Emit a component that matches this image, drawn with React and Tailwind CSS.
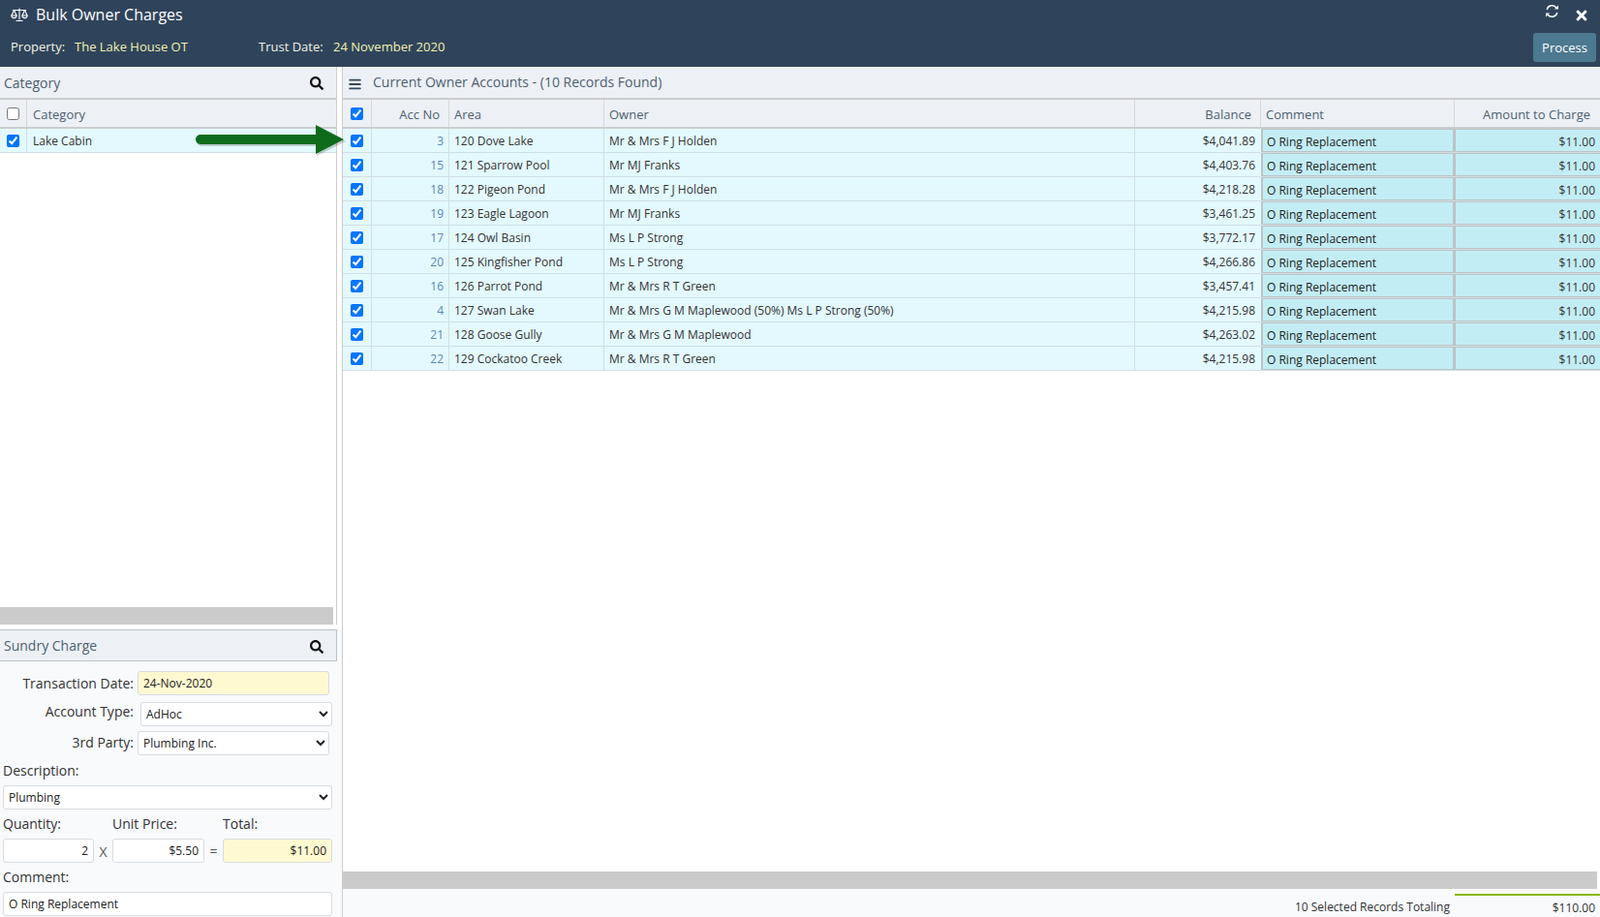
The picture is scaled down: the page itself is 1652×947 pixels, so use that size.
import React from "react";
import { FaSearch, FaBars, FaTimes } from "react-icons/fa";

const rows = [
  { acc: 3, area: "120 Dove Lake", owner: "Mr & Mrs F J Holden", balance: "$4,041.89" },
  { acc: 15, area: "121 Sparrow Pool", owner: "Mr MJ Franks", balance: "$4,403.76" },
  { acc: 18, area: "122 Pigeon Pond", owner: "Mr & Mrs F J Holden", balance: "$4,218.28" },
  { acc: 19, area: "123 Eagle Lagoon", owner: "Mr MJ Franks", balance: "$3,461.25" },
  { acc: 17, area: "124 Owl Basin", owner: "Ms L P Strong", balance: "$3,772.17" },
  { acc: 20, area: "125 Kingfisher Pond", owner: "Ms L P Strong", balance: "$4,266.86" },
  { acc: 16, area: "126 Parrot Pond", owner: "Mr & Mrs R T Green", balance: "$3,457.41" },
  { acc: 4, area: "127 Swan Lake", owner: "Mr & Mrs G M Maplewood (50%) Ms L P Strong (50%)", balance: "$4,215.98" },
  { acc: 21, area: "128 Goose Gully", owner: "Mr & Mrs G M Maplewood", balance: "$4,263.02" },
  { acc: 22, area: "129 Cockatoo Creek", owner: "Mr & Mrs R T Green", balance: "$4,215.98" },
];

function Check({ checked }) {
  return <input type="checkbox" defaultChecked={checked} className="w-[13px] h-[13px] m-0 mt-[1px]" />;
}

function PanelHeader({ title }) {
  return (
    <div className="h-[32px] flex items-center justify-between pl-1 pr-[13px] bg-[#edf0f5] text-[14px] text-[#4d6070]">
      <span>{title}</span>
      <FaSearch className="text-[#111] w-[14px] h-[14px] mt-[2px]" />
    </div>
  );
}

const fieldClass = "h-[25px] bg-white border border-[#d8dbe0] rounded-[3px] text-[12px] text-[#222] px-[5px] outline-none";
const selectClass = "h-[25px] bg-white border border-[#d8dbe0] rounded-[3px] text-[12px] text-[#222] px-[1px] outline-none";

export default function App() {
  return (
    <div className="relative w-[1652px] h-[947px] overflow-hidden bg-white flex flex-col font-['Open_Sans',sans-serif]">
      {/* Header */}
      <div className="h-[69px] shrink-0 bg-[#2f445b] flex justify-between">
        <div className="pl-[11px]">
          <div className="flex items-center h-[30px]">
            <svg width="18" height="16" viewBox="0 0 18 16" fill="none" stroke="white" strokeWidth="1.1">
              <path d="M9 1.5 V13.5 M5.5 14.5 H12.5 M2 3.5 H16" />
              <path d="M3.5 3.5 L1 9 M3.5 3.5 L6 9 M14.5 3.5 L12 9 M14.5 3.5 L17 9" />
              <path d="M0.8 9 H6.2 C6 12.5 1 12.5 0.8 9 Z M11.8 9 H17.2 C17 12.5 12 12.5 11.8 9 Z" />
            </svg>
            <span className="ml-[8px] text-[16px] text-white">Bulk Owner Charges</span>
          </div>
          <div className="flex items-center mt-[5px] text-[13px] h-[28px]">
            <span className="text-[#f2f2e4] w-[66px]">Property:</span>
            <span className="text-[#f3f0b0] w-[190px]">The Lake House OT</span>
            <span className="text-[#f2f2e4] w-[77px]">Trust Date:</span>
            <span className="text-[#f3f0b0]">24 November 2020</span>
          </div>
        </div>
        <div className="flex flex-col items-end pr-[4px]">
          <div className="flex items-start h-[34px] pr-[8px]">
            <svg className="mt-[4px]" width="15" height="15" viewBox="0 0 15 15" fill="none" stroke="white" strokeWidth="1.5">
              <path d="M2.2 6 A5.5 5.5 0 0 1 12 4" />
              <path d="M12.8 9 A5.5 5.5 0 0 1 3 11" />
              <path d="M14 1.5 V5.5 H10" fill="white" stroke="none" />
              <path d="M1 13.5 V9.5 H5" fill="white" stroke="none" />
            </svg>
            <FaTimes className="w-[14px] h-[16px] text-white ml-[16px] mt-[8px]" />
          </div>
          <button className="w-[65px] h-[30px] pt-[1px] bg-[#4d7990] rounded-[3px] text-[13px] text-white">Process</button>
        </div>
      </div>

      <div className="flex flex-1 min-h-0">
        {/* Left column */}
        <div className="w-[354px] shrink-0 flex flex-col border-r border-[#ccc] bg-[#f8fafc]">
          <div className="h-[576px] shrink-0 bg-white flex flex-col">
            <div className="w-[348px] flex-1 flex flex-col border-r border-[#ccc] mr-[5px]">
              <div className="border-b-2 border-[#ccc]">
                <PanelHeader title="Category" />
              </div>
              <div className="h-[30px] flex bg-[#edf0f5] border-b-2 border-[#ccc] text-[13px] text-[#4d6070]">
                <div className="w-[28px] flex items-center justify-center border-r border-[#d8d8d8]"><Check /></div>
                <div className="flex-1 flex items-center pl-[6px] pt-[3px]">Category</div>
              </div>
              <div className="h-[25px] flex bg-[#e3f9fe] border-b border-[#d0dfe3] text-[12px] text-[#333]">
                <div className="w-[28px] flex items-center justify-center border-r border-[#d0dfe3]"><Check checked /></div>
                <div className="flex-1 flex items-center pl-[6px] pt-[2px]">Lake Cabin</div>
              </div>
              <div className="flex-1" />
              <div className="h-[18px] bg-[#cbcbcb] mr-[3px]" />
            </div>
          </div>
          <div className="h-[5px] shrink-0 bg-white" />
          <div className="h-[33px] shrink-0 w-[348px] border-y border-r border-[#bcc2c8] flex flex-col justify-center">
            <PanelHeader title="Sundry Charge" />
          </div>

          {/* Form */}
          <div className="flex-1 pl-[3px] text-[14px] text-[#333]">
            <div className="flex items-center h-[25px] mt-[10px]">
              <span className="w-[135px] text-right -mt-[1px]">Transaction Date:</span>
              <input readOnly value="24-Nov-2020" className={`${fieldClass} ml-[4px] w-[198px] !bg-[#fff9d2]`} />
            </div>
            <div className="flex items-center h-[25px] mt-[7px]">
              <span className="w-[135px] text-right -mt-[6px]">Account Type:</span>
              <select className={`${selectClass} ml-[7px] w-[198px]`}><option>AdHoc</option></select>
            </div>
            <div className="flex items-center h-[25px] mt-[5px]">
              <span className="w-[135px] text-right -mt-[3px]">3rd Party:</span>
              <select className={`${selectClass} ml-[4px] w-[198px]`}><option>Plumbing Inc.</option></select>
            </div>
            <div className="h-[20px] mt-[6px] leading-[20px]">Description:</div>
            <select className={`${selectClass} block w-[340px] mt-[5px]`}><option>Plumbing</option></select>
            <div className="flex h-[20px] mt-[5px] leading-[20px]">
              <span className="w-[113px]">Quantity:</span>
              <span className="w-[114px]">Unit Price:</span>
              <span>Total:</span>
            </div>
            <div className="flex items-center mt-[5px]">
              <input readOnly value="2" className={`${fieldClass} w-[94px] text-right`} />
              <span className="w-[19px] text-center text-[#555] mt-[1px]">X</span>
              <input readOnly value="$5.50" className={`${fieldClass} w-[95px] text-right`} />
              <span className="w-[19px] text-center text-[#555]">=</span>
              <input readOnly value="$11.00" className={`${fieldClass} w-[113px] text-right !bg-[#fff9d2]`} />
            </div>
            <div className="h-[20px] mt-[5px] leading-[20px]">Comment:</div>
            <input readOnly value="O Ring Replacement" className={`${fieldClass} block w-[340px] mt-[5px]`} />
          </div>
        </div>

        {/* Right column */}
        <div className="flex-1 min-w-0 flex flex-col">
          <div className="h-[32px] flex items-center bg-[#edf0f5] border-b-2 border-[#ccc] text-[14px] text-[#4d6070] box-content">
            <FaBars className="ml-[6px] w-[13px] h-[14px] text-[#33475b] mt-[4px]" />
            <span className="ml-[12px] -mt-[2px]">Current Owner Accounts - (10 Records Found)</span>
          </div>
          <div className="h-[30px] flex bg-[#edf0f5] border-b-2 border-[#ccc] text-[13px] text-[#4d6070]">
            <div className="w-[30px] flex items-center justify-center border-r border-[#d8d8d8]"><Check checked /></div>
            <div className="w-[80px] flex items-center justify-end pr-[9px] pt-[3px] border-r border-[#d8d8d8]">Acc No</div>
            <div className="w-[160px] flex items-center pl-[5px] pt-[3px] border-r border-[#d8d8d8]">Area</div>
            <div className="w-[548px] flex items-center pl-[5px] pt-[3px] border-r border-[#d8d8d8]">Owner</div>
            <div className="w-[130px] flex items-center justify-end pr-[9px] pt-[3px] border-r border-[#d8d8d8]">Balance</div>
            <div className="w-[200px] flex items-center pl-[5px] pt-[3px] border-r border-[#d8d8d8]">Comment</div>
            <div className="flex-1 flex items-center justify-end pr-[10px] pt-[3px]">Amount to Charge</div>
          </div>
          {rows.map((r) => (
            <div key={r.acc} className="h-[25px] flex bg-[#e3f9fe] border-b border-[#d0dfe3] text-[12px] text-[#333]">
              <div className="w-[30px] flex items-center justify-center border-r border-[#d0dfe3]"><Check checked /></div>
              <div className="w-[80px] flex items-center justify-end pr-[5px] pt-[2px] border-r border-[#d0dfe3] text-[#5b87b5]">{r.acc}</div>
              <div className="w-[160px] flex items-center pl-[5px] pt-[2px] border-r border-[#d0dfe3]">{r.area}</div>
              <div className="w-[548px] flex items-center pl-[5px] pt-[2px] border-r border-[#d0dfe3]">{r.owner}</div>
              <div className="w-[130px] flex items-center justify-end pr-[6px] pt-[2px]">{r.balance}</div>
              <div className="w-[200px] flex items-center pl-[4px] bg-[#c3edf5] border-x-2 border-y border-[#bcc4c6] text-[#222] pt-[3px]">O Ring Replacement</div>
              <div className="flex-1 flex items-center justify-end pr-[5px] bg-[#c3edf5] border-l border-y border-[#bcc4c6] pt-[3px]">$11.00</div>
            </div>
          ))}
          <div className="flex-1" />
          <div className="h-[18px] bg-[#cbcbcb] mr-[3px]" />
          <div className="h-[29px] flex bg-[#f8fafc] text-[12px] text-[#333]">
            <div className="flex-1 text-right pr-[5px] pt-[10px]">10 Selected Records Totaling</div>
            <div className="w-[150px] mt-[5px] border-t-2 border-[#8ab800] text-right pr-[5px] pt-[4px]">$110.00</div>
          </div>
        </div>
      </div>

      {/* Arrow laid over the rows */}
      <svg className="absolute left-[198px] top-[124px]" width="165" height="42" viewBox="0 0 165 42">
        <path d="M9 15 H128 V5 L158 20 L128 35 V25 H9 a5 5 0 0 1 0 -10 Z" fill="#000" opacity="0.18" transform="translate(1 2)" />
        <path d="M9 15 H128 V5 L157 20 L128 35 V25 H9 a5 5 0 0 1 0 -10 Z" fill="#0f6b1c" />
      </svg>
    </div>
  );
}
